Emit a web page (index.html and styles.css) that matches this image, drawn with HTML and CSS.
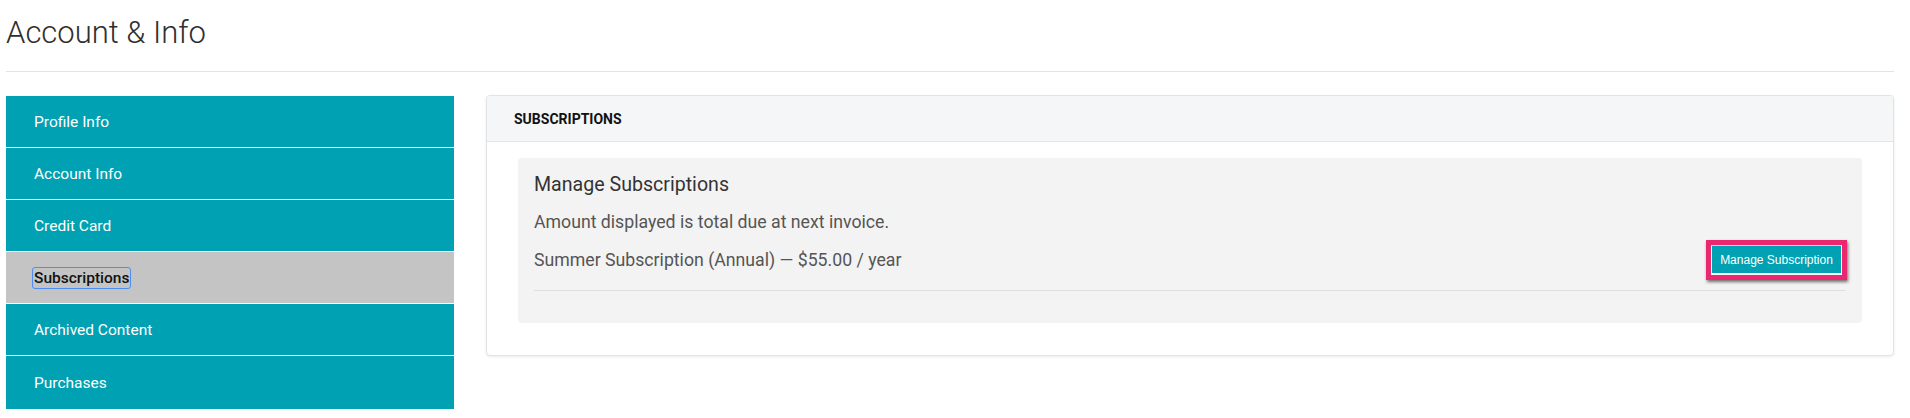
FILE: index.html
```html
<!DOCTYPE html>
<html lang="en">
<head>
<meta charset="utf-8">
<title>Account &amp; Info</title>
<link rel="stylesheet" href="styles.css">
</head>
<body>
<div class="page">
  <h1 class="page-title">Account &amp; Info</h1>
  <hr class="rule">
  <div class="layout">
    <nav class="sidebar">
      <a class="nav-item" href="#">Profile Info</a>
      <a class="nav-item" href="#">Account Info</a>
      <a class="nav-item" href="#">Credit Card</a>
      <a class="nav-item active" href="#"><span class="focus">Subscriptions</span></a>
      <a class="nav-item" href="#">Archived Content</a>
      <a class="nav-item" href="#">Purchases</a>
    </nav>
    <section class="panel">
      <header class="panel-head">SUBSCRIPTIONS</header>
      <div class="panel-body">
        <div class="sub-box">
          <h3 class="sub-title">Manage Subscriptions</h3>
          <p class="sub-note">Amount displayed is total due at next invoice.</p>
          <div class="sub-row">
            <span class="sub-name">Summer Subscription (Annual) — $55.00 / year</span>
            <span class="highlight"><button class="btn" type="button">Manage Subscription</button></span>
          </div>
        </div>
      </div>
    </section>
  </div>
</div>
</body>
</html>
```
FILE: styles.css
```css
* { box-sizing: border-box; }
html, body { margin: 0; padding: 0; background: #fff; }
body { font-family: Roboto, "Liberation Sans", Arial, sans-serif; color: #333; }

.page { padding: 15px 16px 0 6px; }

.page-title {
  margin: 0;
  font-size: 31px;
  line-height: 36px;
  font-weight: 300;
  color: #2f2f2f;
}

.rule {
  margin: 20px 0 0;
  border: 0;
  border-top: 1px solid #e4e4e4;
  height: 0;
}

.layout {
  display: flex;
  gap: 32px;
  align-items: flex-start;
  margin-top: 23px;
}

.sidebar {
  width: 448px;
  flex: 0 0 448px;
  display: flex;
  flex-direction: column;
  margin-top: 1px;
}

.nav-item {
  display: flex;
  align-items: center;
  height: 52px;
  padding: 0 28px;
  background: #00a1b3;
  color: #fff;
  text-decoration: none;
  font-size: 15.5px;
  border-bottom: 1px solid #fff;
}
.nav-item:last-child { border-bottom: 0; height: 53px; }

.nav-item.active {
  background: #c4c4c4;
  color: #111;
  font-weight: 500;
}
.focus {
  outline: 1px solid #4c8ef5;
  outline-offset: 1px;
  border-radius: 1px;
  line-height: 18px;
}

.panel {
  flex: 1;
  border: 1px solid #e3e3e3;
  border-radius: 4px;
  box-shadow: 0 1px 3px rgba(0, 0, 0, 0.08);
  background: #fff;
  overflow: hidden;
}

.panel-head {
  height: 46px;
  display: flex;
  align-items: center;
  padding: 0 27px;
  background: #f5f6f7;
  border-bottom: 1px solid #e5e5e5;
  font-size: 14px;
  font-weight: 700;
  color: #111;
}

.panel-body { padding: 16px 31px 32px; }

.sub-box {
  background: #f3f3f3;
  border-radius: 4px;
  padding: 15px 16px 32px;
}

.sub-title {
  margin: 0;
  font-size: 19.6px;
  line-height: 24px;
  font-weight: 400;
  color: #333;
}

.sub-note {
  margin: 15px 0 0;
  font-size: 17.7px;
  line-height: 20px;
  color: #555;
}

.sub-row {
  margin-top: 8px;
  display: flex;
  align-items: center;
  justify-content: space-between;
  padding-bottom: 10px;
  border-bottom: 1px solid #dedede;
}

.sub-name {
  font-size: 17.7px;
  line-height: 20px;
  color: #555;
}

.highlight {
  display: block;
  border: 5px solid #ea2870;
  box-shadow: 1px 2px 3px rgba(0, 0, 0, 0.55);
  margin-right: -1px;
}

.btn {
  display: block;
  width: 131px;
  height: 30px;
  padding: 0;
  background: #00a1b3;
  color: #fff;
  border: 1px solid #fff;
  border-top-color: #d0d0d0;
  border-bottom-width: 2px;
  font-family: "Liberation Sans", Arial, sans-serif;
  font-size: 12px;
  cursor: pointer;
}
```
